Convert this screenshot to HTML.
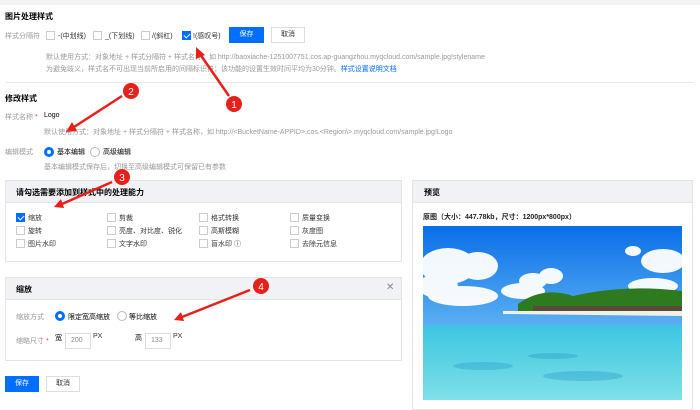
<!DOCTYPE html>
<html><head><meta charset="utf-8"><style>
*{margin:0;padding:0;box-sizing:border-box}
body{width:700px;height:400px;overflow:hidden;background:#fff;font-family:"Liberation Sans","Noto Sans CJK SC",sans-serif;font-size:7px;color:#333;position:relative}
.a{position:absolute;white-space:nowrap}
.b{font-weight:bold;color:#000;font-size:8px}
.g{color:#999}
.cb{position:absolute;width:9px;height:9px;border:1px solid #ccc;background:#fff}
.cb.on{background:#006eff;border-color:#006eff}
.cb.on:after{content:"";position:absolute;left:2px;top:0px;width:3px;height:5px;border:solid #fff;border-width:0 1px 1px 0;transform:rotate(45deg)}
.rd{position:absolute;width:10px;height:10px;border:1px solid #bbb;border-radius:50%;background:#fff}
.rd.on{border:3px solid #006eff}
.btn{position:absolute;height:16px;line-height:14px;text-align:center;border:1px solid #ddd;background:#fff;font-size:7px}
.btn.p{background:#006eff;border-color:#006eff;color:#fff}
.panel{position:absolute;border:1px solid #e2e4e8;background:#fff}
.ph{height:22px;background:#f0f2f5;border-bottom:1px solid #e2e4e8;font-weight:bold;font-size:8px;color:#000;padding:6px 10px}
.in{position:absolute;width:26px;height:16px;border:1px solid #ddd;color:#888;padding:3px 5px;font-size:7px}
</style></head><body>
<div class="a" style="left:0;top:0;width:700px;height:5px;background:#f2f2f2"></div>
<div class="a b" style="left:5px;top:11px">图片处理样式</div>
<div class="a g" style="left:5px;top:31px">样式分隔符</div>
<div class="cb" style="left:46px;top:31px"></div><div class="a" style="left:58px;top:31px">-(中划线)</div>
<div class="cb" style="left:93px;top:31px"></div><div class="a" style="left:105px;top:31px">_(下划线)</div>
<div class="cb" style="left:141px;top:31px"></div><div class="a" style="left:152px;top:31px">/(斜杠)</div>
<div class="cb on" style="left:182px;top:31px"></div><div class="a" style="left:193px;top:31px">!(感叹号)</div>
<div class="btn p" style="left:229px;top:27px;width:35px">保存</div>
<div class="btn" style="left:271px;top:27px;width:34px">取消</div>
<div class="a g" style="left:46px;top:52px">默认使用方式：对象地址 + 样式分隔符 + 样式名称，如 http://baoxiache-1251007751.cos.ap-guangzhou.myqcloud.com/sample.jpg!stylename</div>
<div class="a g" style="left:46px;top:64px">为避免歧义，样式名不可出现当前所启用的间隔标识符；该功能的设置生效时间平均为30分钟。<span style="color:#006eff">样式设置说明文档</span></div>
<div class="a" style="left:5px;top:82px;width:688px;height:1px;background:#e8e8e8"></div>
<div class="a b" style="left:5px;top:93px">修改样式</div>
<div class="a g" style="left:5px;top:112px">样式名称 <span style="color:#e54545">*</span></div>
<div class="a" style="left:44px;top:112px;color:#000">Logo</div>
<div class="a g" style="left:44px;top:127px">默认使用方式：对象地址 + 样式分隔符 + 样式名称，如 http://&lt;BucketName-APPID&gt;.cos.&lt;Region\&gt;.myqcloud.com/sample.jpg!Logo</div>
<div class="a g" style="left:5px;top:147px">编辑模式</div>
<div class="rd on" style="left:44px;top:147px"></div><div class="a" style="left:57px;top:147px;color:#000">基本编辑</div>
<div class="rd" style="left:90px;top:147px"></div><div class="a" style="left:103px;top:147px;color:#000">高级编辑</div>
<div class="a g" style="left:44px;top:162px">基本编辑模式保存后，切换至高级编辑模式可保留已有参数</div>

<div class="panel" style="left:5px;top:180px;width:397px;height:82px">
<div class="ph">请勾选需要添加到样式中的处理能力</div></div>
<div class="cb on" style="left:16px;top:213px"></div><div class="a" style="left:28px;top:213px">缩放</div>
<div class="cb" style="left:107px;top:213px"></div><div class="a" style="left:119px;top:213px">剪裁</div>
<div class="cb" style="left:199px;top:213px"></div><div class="a" style="left:211px;top:213px">格式转换</div>
<div class="cb" style="left:290px;top:213px"></div><div class="a" style="left:302px;top:213px">质量变换</div>
<div class="cb" style="left:16px;top:226px"></div><div class="a" style="left:28px;top:226px">旋转</div>
<div class="cb" style="left:107px;top:226px"></div><div class="a" style="left:119px;top:226px">亮度、对比度、锐化</div>
<div class="cb" style="left:199px;top:226px"></div><div class="a" style="left:211px;top:226px">高斯模糊</div>
<div class="cb" style="left:290px;top:226px"></div><div class="a" style="left:302px;top:226px">灰度图</div>
<div class="cb" style="left:16px;top:239px"></div><div class="a" style="left:28px;top:239px">图片水印</div>
<div class="cb" style="left:107px;top:239px"></div><div class="a" style="left:119px;top:239px">文字水印</div>
<div class="cb" style="left:199px;top:239px"></div><div class="a" style="left:211px;top:239px">盲水印 ⓘ</div>
<div class="cb" style="left:290px;top:239px"></div><div class="a" style="left:302px;top:239px">去除元信息</div>

<div class="panel" style="left:5px;top:277px;width:397px;height:84px">
<div class="ph">缩放</div></div>
<div class="a" style="left:386px;top:282px;font-size:10px;color:#888">✕</div>
<div class="a g" style="left:16px;top:312px">缩放方式</div>
<div class="rd on" style="left:55px;top:311px"></div><div class="a" style="left:68px;top:312px;color:#000">限定宽高缩放</div>
<div class="rd" style="left:117px;top:311px"></div><div class="a" style="left:129px;top:312px;color:#000">等比缩放</div>
<div class="a g" style="left:16px;top:336px">缩略尺寸 <span style="color:#e54545">*</span></div>
<div class="a" style="left:55px;top:333px;color:#000">宽</div>
<div class="in" style="left:65px;top:333px">200</div><div class="a" style="left:93px;top:333px">PX</div>
<div class="a" style="left:135px;top:333px;color:#000">高</div>
<div class="in" style="left:145px;top:333px">133</div><div class="a" style="left:173px;top:333px">PX</div>

<div class="btn p" style="left:5px;top:376px;width:34px">保存</div>
<div class="btn" style="left:46px;top:376px;width:34px">取消</div>

<div class="panel" style="left:412px;top:180px;width:281px;height:230px">
<div class="ph" style="padding-left:11px">预览</div></div>
<div class="a" style="left:423px;top:212px;font-weight:bold;color:#222">原图（大小：447.78kb，尺寸：1200px*800px）</div>
<svg class="a" style="left:423px;top:226px" width="259" height="174" viewBox="0 0 259 174">
<defs><linearGradient id="s" x1="0" y1="0" x2="0" y2="1"><stop offset="0" stop-color="#0a6ee8"/><stop offset="1" stop-color="#5ab0f2"/></linearGradient>
<linearGradient id="w" x1="0" y1="0" x2="0" y2="1"><stop offset="0" stop-color="#3cc6e0"/><stop offset="1" stop-color="#7fe0e8"/></linearGradient></defs>
<rect width="259" height="100" fill="url(#s)"/>
<rect y="100" width="259" height="74" fill="url(#w)"/>
<g fill="#fff" opacity=".95">
<ellipse cx="25" cy="40" rx="28" ry="18"/><ellipse cx="55" cy="40" rx="20" ry="14"/><ellipse cx="40" cy="70" rx="35" ry="10"/><ellipse cx="15" cy="60" rx="20" ry="12"/>
<ellipse cx="100" cy="65" rx="22" ry="8"/><ellipse cx="128" cy="50" rx="12" ry="8"/><ellipse cx="110" cy="55" rx="14" ry="8"/>
<ellipse cx="240" cy="35" rx="22" ry="12"/><ellipse cx="210" cy="25" rx="8" ry="5"/><ellipse cx="230" cy="60" rx="25" ry="8"/></g>
<path d="M95 78 Q120 60 150 70 Q200 58 259 65 L259 85 L95 85Z" fill="#2e7a1f"/>
<rect x="110" y="80" width="149" height="8" fill="#5a4a3a"/>
<path d="M80 85 L259 85 L259 90 L80 88Z" fill="#f2efe6"/>
<g fill="#2aa0c8" opacity=".4"><ellipse cx="60" cy="140" rx="30" ry="4"/><ellipse cx="160" cy="150" rx="40" ry="5"/><ellipse cx="130" cy="130" rx="25" ry="3"/></g>
</svg>

<svg class="a" style="left:0;top:0" width="700" height="400">
<g stroke="#e8201a" stroke-width="2.5" fill="#e8201a">
<line x1="229" y1="96" x2="200" y2="54"/><polygon points="196,47 205,55 196,59" stroke="none"/>
<line x1="122" y1="96" x2="74" y2="127"/><polygon points="66,132 72,122 77,131" stroke="none"/>
<line x1="112" y1="182" x2="62" y2="204"/><polygon points="54,207 61,199 64,208" stroke="none"/>
<line x1="250" y1="290" x2="182" y2="317"/><polygon points="174,320 181,312 184,321" stroke="none"/>
</g>
<g fill="#e8201a"><circle cx="234" cy="104" r="8"/><circle cx="131" cy="91" r="8"/><circle cx="122" cy="177" r="8"/><circle cx="261" cy="286" r="8"/></g>
<g fill="#fff" font-size="10" font-family="Liberation Sans" text-anchor="middle">
<text x="234" y="108">1</text><text x="131" y="95">2</text><text x="122" y="181">3</text><text x="261" y="290">4</text></g>
</svg>
</body></html>
